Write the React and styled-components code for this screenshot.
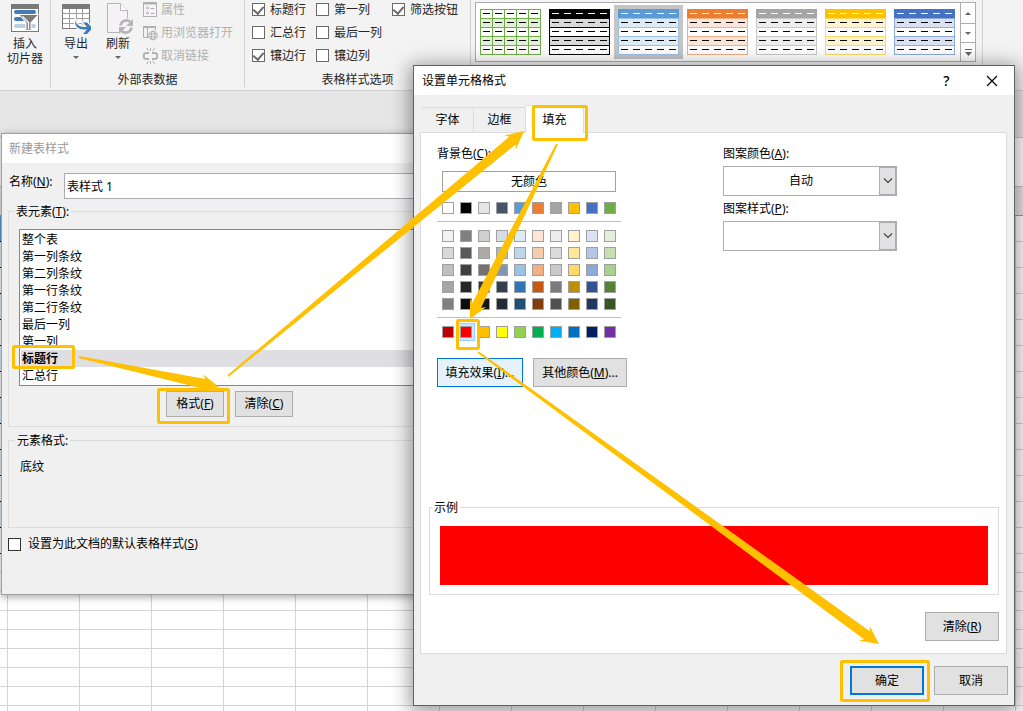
import React, { Fragment, useState } from 'react';
import styled, { createGlobalStyle } from 'styled-components';

const GlobalStyle = createGlobalStyle`
    * {
        box-sizing: border-box;
    }
    body {
        margin: 0;
        overflow: hidden;
    }
    body, button, input, select {
        font-family: "Noto Sans", "Noto Sans CJK SC", sans-serif;
        font-size: 12px;
        line-height: 16px;
        color: black;
    }
    u {
        text-underline-offset: 1px;
    }
`;

const Desktop = styled.div`
    position: relative;
    height: 100vh;
    overflow: hidden;
    background-color: white;
`;

/* ribbon */

const Ribbon = styled.header`
    display: flex;
    padding-bottom: 3px;
    background-color: #f3f3f3;
    border-bottom: 1px solid #d0d0d0;
`;
const Group = styled.section`
    display: flex;
    flex-direction: column;
    flex: none;
    height: 87px;
    width: ${props => props.$width};
    border-right: 1px solid #d2d2d2;
`;
const GroupBody = styled.div`
    display: flex;
    flex: 1;
    padding: 0 ${props => props.$pad || '0'};
`;
const GroupLabel = styled.div`
    line-height: 14px;
    text-align: center;
    color: #262626;
`;
const BigButton = styled.button`
    display: flex;
    flex-direction: column;
    align-items: center;
    width: ${props => props.$wide ? '50px' : '42px'};
    padding: 3px 0 0;
    border: none;
    background: none;
    line-height: 15px;
    color: #262626;
    svg {
        flex: none;
        margin-bottom: ${props => props.$wide ? '3px' : '1px'};
    }
`;
const Caret = styled.span`
    margin-top: 5px;
    border: 3px solid transparent;
    border-top-color: #666;
    border-bottom: none;
`;
const SmallList = styled.div`
    display: flex;
    flex-direction: column;
    gap: 3px;
    margin-left: 4px;
`;
const SmallButton = styled.button`
    display: flex;
    align-items: center;
    gap: 3px;
    height: 20px;
    padding: 0;
    border: none;
    background: none;
    white-space: nowrap;
    &:disabled {
        color: #b0b0b0;
    }
`;
const OptionGrid = styled.div`
    display: grid;
    grid-template-columns: 64px 76px auto;
    grid-auto-rows: 19px;
    row-gap: 4px;
`;
const CheckLabel = styled.label`
    display: flex;
    align-items: center;
    gap: ${props => props.$gap || '5px'};
    white-space: nowrap;
    color: ${props => props.$dark ? 'black' : '#262626'};
`;
const Checkbox = styled.input`
    appearance: none;
    display: grid;
    place-items: center;
    width: 13px;
    height: 13px;
    margin: 0;
    background-color: white;
    border: 1px solid ${props => props.$dark ? '#333' : '#6a6a6a'};
    &:checked::after {
        content: "";
        width: 5px;
        height: 8px;
        margin-bottom: 2px;
        border: solid #6a6a6a;
        border-width: 0 2px 2px 0;
        transform: rotate(40deg);
    }
`;
const Gallery = styled.div`
    display: flex;
    margin-top: 2px;
    height: 60px;
    background-color: white;
    border: 1px solid #abadb3;
`;
const StyleButton = styled.button`
    flex: none;
    width: 69px;
    height: 54px;
    margin: 2px 0;
    padding: 4px;
    border: none;
    background-color: ${props => props.$active ? '#c5c5c5' : 'transparent'};
    svg {
        display: block;
    }
`;
const GalleryScroll = styled.div`
    display: grid;
    grid-template-rows: 20px 19px 19px;
    width: 15px;
    margin-left: 1px;
    border-left: 1px solid #abadb3;
`;
const ScrollButton = styled.button`
    display: grid;
    place-items: center;
    padding: 0;
    border: none;
    border-top: ${props => props.$first ? 'none' : '1px solid #abadb3'};
    background: none;
`;

/* worksheet */

const ToolStrip = styled.div`
    height: 47px;
    background-color: #e6e6e6;
    border-bottom: 1px solid #c6c6c6;
`;
const FormulaBar = styled.div`
    height: 49px;
    border-bottom: 1px solid #c6c6c6;
`;
const ColumnBar = styled.div`
    height: 29px;
    background-color: #e6e6e6;
    border-bottom: 1px solid #9b9b9b;
`;
const Sheet = styled.table`
    table-layout: fixed;
    width: 1088px;
    border-spacing: 0;
`;
const Cell = styled.td`
    height: ${props => props.$tall ? '26px' : '19px'};
    padding: 0;
    border: solid #d4d4d4;
    border-width: 0 1px 1px 0;
    background-color: ${props => props.$fill || 'white'};
    border-bottom-color: ${props => props.$fill ? 'black' : '#d4d4d4'};
`;

/* dialogs */

const Window = styled.div`
    position: absolute;
    top: ${props => props.$top};
    left: ${props => props.$left};
    width: ${props => props.$width};
    background-color: #f0f0f0;
    border: 1px solid ${props => props.$active ? '#5f6264' : '#a0a0a0'};
    box-shadow: ${props => props.$active
        ? '0 3px 18px 3px rgba(0, 0, 0, 0.4)'
        : '0 2px 8px rgba(0, 0, 0, 0.35)'};
`;
const TitleBar = styled.div`
    display: flex;
    align-items: center;
    height: 29px;
    padding-left: ${props => props.$active ? '8px' : '7px'};
    background-color: white;
    color: ${props => props.$active ? 'black' : '#999'};
`;
const TitleText = styled.span`
    flex: 1;
`;
const TitleButton = styled.button`
    display: grid;
    place-items: center;
    width: 45px;
    height: 28px;
    padding: 0;
    border: none;
    background: none;
    font-size: 14px;
    font-weight: 500;
`;
const Button = styled.button`
    width: ${props => props.$width};
    height: ${props => props.$short ? '26px' : '29px'};
    padding: 0;
    white-space: nowrap;
    background-color: ${props => props.$hot ? '#e5f1fb' : '#e1e1e1'};
    border: ${props => props.$primary ? '2px' : '1px'} solid
        ${props => props.$hot || props.$primary ? '#0078d7' : '#adadad'};
`;
const Box = styled.fieldset`
    min-width: 0;
    margin: 0;
    padding: ${props => props.$pad};
    border: 1px solid #dcdcdc;
    legend {
        margin-left: ${props => props.$flush ? '-8px' : '-5px'};
        padding: 0 2px;
        line-height: 17px;
    }
`;

const StyleBody = styled.div`
    padding: 10px 6px 42px;
`;
const NameRow = styled.div`
    display: flex;
    gap: 11px;
    margin-bottom: 4px;
    line-height: 18px;
    label {
        width: 45px;
        padding-left: 1px;
        white-space: nowrap;
    }
`;
const NameInput = styled.input`
    flex: 1;
    height: 26px;
    padding: 0 2px;
    border: 1px solid #abadb3;
    background-color: white;
`;
const StyleGroups = styled.div`
    display: grid;
    gap: 5px;
`;
const List = styled.ul`
    margin: 0;
    padding: 1px;
    list-style: none;
    background-color: white;
    border: 1px solid #828790;
`;
const Item = styled.li`
    height: 17px;
    padding: 0 1px;
    line-height: 17px;
    font-weight: ${props => props.$active ? 700 : 400};
    background-color: ${props => props.$active ? '#dfdee3' : 'white'};
`;
const ListButtons = styled.div`
    display: flex;
    gap: 11px;
    margin: 5px 0 0 147px;
`;
const DefaultRow = styled.div`
    display: flex;
    margin-top: 8px;
`;

const FormatBody = styled.div`
    padding: 9px 7px 10px 6px;
`;
const Tabs = styled.div`
    display: flex;
    align-items: flex-end;
    height: 28px;
    padding-left: 2px;
`;
const Tab = styled.button`
    position: relative;
    height: ${props => props.$active ? '28px' : '25px'};
    width: ${props => props.$active ? '58px' : '52px'};
    margin-bottom: ${props => props.$active ? '-1px' : '0'};
    padding: 0;
    background-color: ${props => props.$active ? 'white' : '#f0f0f0'};
    border: solid #dcdcdc;
    border-width: 1px 1px 0 0;
`;
const Panel = styled.div`
    padding: 13px 7px 12px 8px;
    background-color: white;
    border: 1px solid #dcdcdc;
`;
const Columns = styled.div`
    display: grid;
    grid-template-columns: 286px 174px;
    padding-left: 8px;
    min-height: 353px;
`;
const Palette = styled.div`
    width: 184px;
    margin-top: 9px;
    padding: 0 5px;
`;
const NoColor = styled.button`
    width: 100%;
    height: 21px;
    margin-bottom: 10px;
    padding: 0;
    background-color: white;
    border: 1px solid #a0a0a0;
    line-height: 18px;
`;
const Swatches = styled.div`
    display: grid;
    grid-template-columns: repeat(10, 12px);
    gap: 5px 6px;
`;
const Swatch = styled.button`
    height: 12px;
    padding: 0;
    background-color: ${props => props.$color};
    border: 1px solid #a0a0a0;
    box-shadow: ${props => props.$active
        ? '0 0 0 2px #cce8ff, 0 0 0 3px #99d1ff'
        : 'none'};
`;
const Rule = styled.hr`
    height: 1px;
    margin: 7px -5px 8px;
    border: none;
    background-color: #c0c0c0;
`;
const ColorButtons = styled.div`
    display: flex;
    gap: 10px;
    margin-top: 20px;
`;
const Picker = styled.div`
    display: grid;
    height: 30px;
    margin: 4px 0 5px;
    border: 1px solid #abadb3;
    > * {
        grid-area: 1 / 1;
    }
`;
const Select = styled.select`
    appearance: none;
    width: 100%;
    padding: 0 18px 0 0;
    border: none;
    background-color: white;
    text-align: center;
    text-align-last: center;
`;
const PickerArrow = styled.span`
    display: grid;
    place-items: center;
    justify-self: end;
    width: 17px;
    background-color: #e1e1e1;
    border: 1px solid #abadb3;
    pointer-events: none;
`;
const Sample = styled.div`
    height: 59px;
    background-color: red;
`;
const PanelFooter = styled.div`
    display: flex;
    justify-content: flex-end;
    margin-top: 17px;
`;
const DialogFooter = styled.div`
    display: flex;
    justify-content: flex-end;
    gap: 10px;
    margin: 12px -1px 0 0;
`;

const Overlay = styled.svg`
    position: absolute;
    top: 0;
    left: 0;
    pointer-events: none;
`;

const SlicerIcon = () => (
    <svg width="30" height="30" viewBox="0 0 30 30">
        <rect x="1.5" y="1.5" width="27" height="27" fill="white" stroke="#7a7a7a" />
        <rect x="1" y="1" width="28" height="5" fill="#7a7a7a" />
        <rect x="4" y="7" width="22" height="4" rx="2" fill="#3f7cb8" />
        <rect x="4" y="14" width="11" height="4" rx="2" fill="#3f7cb8" />
        <rect x="4" y="21" width="22" height="4" rx="2" fill="#b9cfe6" />
        <path d="M9 11.5h19.500l-7.500 8v8h-5v-8z" fill="#7a7a7a" stroke="white" />
        <path d="M12.500 13.500l6 6v7" fill="none" stroke="white" strokeWidth="1.300" />
    </svg>
);

const ExportIcon = () => (
    <svg width="30" height="32" viewBox="0 0 30 32">
        <rect x="1.5" y="1.5" width="27" height="24" fill="white" stroke="#7a7a7a" />
        <rect x="1" y="1" width="28" height="5" fill="#7a7a7a" />
        <path d="M2 10.500h26M2 15.500h26M2 20.500h26M8.500 6v19M15.500 6v19M21.500 6v19" stroke="#a0a0a0" />
        <path d="M14.500 18c1.500 4.500 5 6 9 6h2.500l-4-4.500h4l5.500 5.500-5.500 6h-4l4-4.500H23c-6 0-9.500-4-8.500-8.500z" fill="#3f7cb8" stroke="#f3f3f3" strokeWidth="3" paintOrder="stroke" />
    </svg>
);

const RefreshIcon = () => (
    <svg width="30" height="32" viewBox="0 0 30 32">
        <path d="M4.500 .5h13l7 7v22h-20z" fill="#f6f2f8" stroke="#b5b5b5" />
        <path d="M17.500 .5v7h7" fill="white" stroke="#b5b5b5" />
        <circle cx="23" cy="23.500" r="8.500" fill="#f3f3f3" />
        <path d="M17.500 22.500a6 6 0 0 1 10-3.500M28.500 24.500a6 6 0 0 1-10 3.500" fill="none" stroke="#b5b5b5" strokeWidth="2.600" />
        <path d="M30 16v7h-7zM16 31v-7h7z" fill="#b5b5b5" />
    </svg>
);

const PropsIcon = () => (
    <svg width="15" height="16" viewBox="0 0 15 16" fill="none" stroke="#b0b0b0">
        <rect x=".5" y=".5" width="13" height="14" fill="#f6f2f8" />
        <path d="M0 1.500h14" strokeWidth="2" />
        <circle cx="4.500" cy="6" r="1" />
        <circle cx="4.500" cy="11" r="1" />
        <path d="M7.500 6.500h4M7.500 11.500h4" />
    </svg>
);

const BrowserIcon = () => (
    <svg width="15" height="16" viewBox="0 0 15 16" fill="none" stroke="#b0b0b0">
        <path d="M5.500 12.500h-5V1.500h12v4M4.500 3v9" />
        <path d="M0 2h13" strokeWidth="2" />
        <circle cx="10" cy="10.500" r="4.300" fill="#f3f3f3" />
        <path d="M6 9h8M6 12h8" />
        <ellipse cx="10" cy="10.500" rx="1.800" ry="4.300" />
    </svg>
);

const UnlinkIcon = () => (
    <svg width="15" height="16" viewBox="0 0 15 16" fill="none" stroke="#b0b0b0">
        <path d="M6 5H3.500a3 3 0 0 0 0 6H6M9 5h2.500a3 3 0 0 1 0 6H9" strokeWidth="2" />
        <path d="M3.500 0l2 3M7.500 0v3M11.500 0l-2 3M3.500 16l2-3M7.500 16v-3M11.500 16l-2-3" />
    </svg>
);

const CloseIcon = () => (
    <svg width="12" height="12" viewBox="0 0 12 12">
        <path d="M1 1l10 10M11 1L1 11" stroke="black" strokeWidth="1.200" />
    </svg>
);

const Chevron = () => (
    <svg width="10" height="6" viewBox="0 0 10 6">
        <path d="M1 .5l4 4 4-4" fill="none" stroke="#444" strokeWidth="1.200" />
    </svg>
);

const tableStyles = [
    { head: 'white', band: '#e2efda', line: '#70ad47', dash: 'black', grid: true },
    { head: 'black', band: '#d9d9d9', line: 'black', dash: 'white' },
    { head: '#5b9bd5', band: '#ddebf7', line: '#9bc2e6', dash: 'white' },
    { head: '#ed7d31', band: '#fce4d6', line: '#f4b084', dash: 'white' },
    { head: '#a5a5a5', band: '#ededed', line: '#c9c9c9', dash: 'white' },
    { head: '#ffc000', band: '#fff2cc', line: '#ffd966', dash: 'white' },
    { head: '#4472c4', band: '#d9e1f2', line: '#8ea9db', dash: 'white' },
];

const TableThumb = ({ head, band, line, dash, grid }) => (
    <svg width="61" height="46" viewBox="0 0 61 46" shapeRendering="crispEdges">
        {[head, band, 'white', band, 'white'].map((fill, i) => (
            <Fragment key={i}>
                <rect x="0" y={i * 9} width="61" height="9" fill={fill} />
                {(i > 0 || grid) && <rect x=".5" y={i * 9 + 0.5} width="60" height="9" fill="none" stroke={line} />}
            </Fragment>
        ))}
        {grid && <path d="M12.500 0v46M24.500 0v46M36.500 0v46M48.500 0v46" stroke={line} />}
        {[0, 1, 2, 3, 4].map(row => [3, 15, 27, 39, 51].map(x => (
            <rect key={`${row}-${x}`} x={x} y={row * 9 + 4} width="7" height="1" fill={row === 0 ? dash : 'black'} />
        )))}
    </svg>
);

const options = [
    ['标题行', true], ['第一列', false], ['筛选按钮', true],
    ['汇总行', false], ['最后一列', false], null,
    ['镶边行', true], ['镶边列', false],
];

const elements = ['整个表', '第一列条纹', '第二列条纹', '第一行条纹', '第二行条纹', '最后一列', '第一列', '标题行', '汇总行'];

const themeColors = ['#ffffff', '#000000', '#e7e6e6', '#44546a', '#5b9bd5', '#ed7d31', '#a5a5a5', '#ffc000', '#4472c4', '#70ad47'];
const tints = [
    '#f2f2f2', '#808080', '#d0cece', '#d6dce4', '#ddebf7', '#fce4d6', '#ededed', '#fff2cc', '#d9e1f2', '#e2efda',
    '#d9d9d9', '#595959', '#aeaaaa', '#acb9ca', '#bdd7ee', '#f8cbad', '#dbdbdb', '#ffe699', '#b4c6e7', '#c6e0b4',
    '#bfbfbf', '#404040', '#757171', '#8497b0', '#9bc2e6', '#f4b084', '#c9c9c9', '#ffd966', '#8ea9db', '#a9d08e',
    '#a6a6a6', '#262626', '#3a3838', '#333f4f', '#2f75b5', '#c65911', '#7b7b7b', '#bf8f00', '#305496', '#548235',
    '#808080', '#0d0d0d', '#161616', '#222b35', '#1f4e78', '#833c0c', '#525252', '#806000', '#203764', '#375623',
];
const standardColors = ['#c00000', '#ff0000', '#ffc000', '#ffff00', '#92d050', '#00b050', '#00b0f0', '#0070c0', '#002060', '#7030a0'];

const SwatchGrid = ({ colors, selected, onPick }) => (
    <Swatches>
        {colors.map((color, i) => (
            <Swatch
                key={i}
                type="button"
                aria-label={color}
                $color={color}
                $active={selected === color}
                onClick={() => onPick(color)}
            />
        ))}
    </Swatches>
);

// tapered arrow, thin at the tail and wide at the head
const Arrow = ({ from, to }) => {
    const length = Math.hypot(to[0] - from[0], to[1] - from[1]);
    const ux = (to[0] - from[0]) / length;
    const uy = (to[1] - from[1]) / length;
    const at = (along, side) => `${from[0] + ux * along - uy * side},${from[1] + uy * along + ux * side}`;
    const points = [
        at(0, 1), at(length - 15, 5), at(length - 18, 9), at(length, 0),
        at(length - 18, -9), at(length - 15, -5), at(0, -1),
    ];
    return <polygon points={points.join(' ')} fill="#ffc000" />;
};

const Ring = props => <rect {...props} rx="1" fill="none" stroke="#ffc000" strokeWidth="3" />;

const sheetRows = [...Array(13).fill(true), ...Array(20).fill(false)];
const sheetColumns = Array(15).fill(0);

const fillFor = (tall, row) => {
    if (!tall) return undefined;
    if (row === 0) return '#5b9bd5';
    return row % 2 ? '#ddebf7' : '#f8f8f8';
};

const App = () => {
    const [element, setElement] = useState('标题行');
    const [color, setColor] = useState('#ff0000');

    return (
        <Desktop>
            <GlobalStyle />
            <Ribbon>
                <Group $width="51px">
                    <GroupBody>
                        <BigButton $wide><SlicerIcon />插入<br />切片器</BigButton>
                    </GroupBody>
                </Group>
                <Group $width="194px">
                    <GroupBody $pad="4px">
                        <BigButton><ExportIcon />导出<Caret /></BigButton>
                        <BigButton><RefreshIcon />刷新<Caret /></BigButton>
                        <SmallList>
                            <SmallButton disabled><PropsIcon />属性</SmallButton>
                            <SmallButton disabled><BrowserIcon />用浏览器打开</SmallButton>
                            <SmallButton disabled><UnlinkIcon />取消链接</SmallButton>
                        </SmallList>
                    </GroupBody>
                    <GroupLabel>外部表数据</GroupLabel>
                </Group>
                <Group $width="226px">
                    <GroupBody $pad="7px">
                        <OptionGrid>
                            {options.map((option, i) => option
                                ? (
                                    <CheckLabel key={i}>
                                        <Checkbox type="checkbox" defaultChecked={option[1]} />
                                        {option[0]}
                                    </CheckLabel>
                                )
                                : <span key={i} />
                            )}
                        </OptionGrid>
                    </GroupBody>
                    <GroupLabel>表格样式选项</GroupLabel>
                </Group>
                <Group $width="512px">
                    <GroupBody $pad="4px">
                        <Gallery>
                            {tableStyles.map((style, i) => (
                                <StyleButton key={i} $active={i === 2} aria-label={`style ${i + 1}`}>
                                    <TableThumb {...style} />
                                </StyleButton>
                            ))}
                            <GalleryScroll>
                                <ScrollButton $first aria-label="up">
                                    <svg width="6" height="3"><path d="M0 3l3-3 3 3z" fill="#666" /></svg>
                                </ScrollButton>
                                <ScrollButton aria-label="down">
                                    <svg width="6" height="3"><path d="M0 0l3 3 3-3z" fill="#666" /></svg>
                                </ScrollButton>
                                <ScrollButton aria-label="more">
                                    <svg width="7" height="7"><path d="M0 0h7v1H0zM0 3l3.500 4L7 3z" fill="#666" /></svg>
                                </ScrollButton>
                            </GalleryScroll>
                        </Gallery>
                    </GroupBody>
                </Group>
            </Ribbon>
            <ToolStrip />
            <FormulaBar />
            <ColumnBar />
            <Sheet>
                <colgroup>
                    <col style={{ width: 8 }} />
                    {sheetColumns.map((_, i) => <col key={i} />)}
                </colgroup>
                <tbody>
                    {sheetRows.map((tall, row) => (
                        <tr key={row}>
                            <Cell $tall={tall} $fill={fillFor(tall, row)} />
                            {sheetColumns.map((_, i) => <Cell key={i} $tall={tall} />)}
                        </tr>
                    ))}
                </tbody>
            </Sheet>

            <Window role="dialog" aria-label="新建表样式" $top="133px" $left="1px" $width="480px">
                <TitleBar><TitleText>新建表样式</TitleText></TitleBar>
                <StyleBody>
                    <NameRow>
                        <label htmlFor="style-name">名称(<u>N</u>):</label>
                        <NameInput id="style-name" defaultValue="表样式 1" />
                    </NameRow>
                    <StyleGroups>
                        <Box $pad="9px 10px 9px">
                            <legend>表元素(<u>T</u>):</legend>
                            <List role="listbox">
                                {elements.map(name => (
                                    <Item
                                        key={name}
                                        role="option"
                                        aria-selected={name === element}
                                        $active={name === element}
                                        onClick={() => setElement(name)}
                                    >
                                        {name}
                                    </Item>
                                ))}
                            </List>
                            <ListButtons>
                                <Button $short $width="58px">格式(<u>F</u>)</Button>
                                <Button $short $width="58px">清除(<u>C</u>)</Button>
                            </ListButtons>
                        </Box>
                        <Box $pad="10px 11px 52px">
                            <legend>元素格式:</legend>
                            底纹
                        </Box>
                    </StyleGroups>
                    <DefaultRow>
                        <CheckLabel $dark $gap="7px">
                            <Checkbox $dark type="checkbox" />
                            <span>设置为此文档的默认表格样式(<u>S</u>)</span>
                        </CheckLabel>
                    </DefaultRow>
                </StyleBody>
            </Window>

            <Window role="dialog" aria-label="设置单元格格式" $active $top="65px" $left="413px" $width="602px">
                <TitleBar $active>
                    <TitleText>设置单元格格式</TitleText>
                    <TitleButton aria-label="help">?</TitleButton>
                    <TitleButton aria-label="close"><CloseIcon /></TitleButton>
                </TitleBar>
                <FormatBody>
                    <Tabs role="tablist">
                        <Tab role="tab">字体</Tab>
                        <Tab role="tab">边框</Tab>
                        <Tab role="tab" aria-selected $active>填充</Tab>
                    </Tabs>
                    <Panel>
                        <Columns>
                            <div>
                                <div>背景色(<u>C</u>):</div>
                                <Palette>
                                    <NoColor>无颜色</NoColor>
                                    <SwatchGrid colors={themeColors} onPick={setColor} />
                                    <Rule />
                                    <SwatchGrid colors={tints} onPick={setColor} />
                                    <Rule />
                                    <SwatchGrid colors={standardColors} selected={color} onPick={setColor} />
                                </Palette>
                                <ColorButtons>
                                    <Button $hot $width="86px">填充效果(<u>I</u>)...</Button>
                                    <Button $width="94px">其他颜色(<u>M</u>)...</Button>
                                </ColorButtons>
                            </div>
                            <div>
                                <label htmlFor="pattern-color">图案颜色(<u>A</u>):</label>
                                <Picker>
                                    <Select id="pattern-color"><option>自动</option></Select>
                                    <PickerArrow><Chevron /></PickerArrow>
                                </Picker>
                                <label htmlFor="pattern-style">图案样式(<u>P</u>):</label>
                                <Picker>
                                    <Select id="pattern-style"><option> </option></Select>
                                    <PickerArrow><Chevron /></PickerArrow>
                                </Picker>
                            </div>
                        </Columns>
                        <Box $flush $pad="10px 10px 9px">
                            <legend>示例</legend>
                            <Sample style={{ backgroundColor: color }} />
                        </Box>
                        <PanelFooter>
                            <Button $width="74px">清除(<u>R</u>)</Button>
                        </PanelFooter>
                    </Panel>
                    <DialogFooter>
                        <Button $primary $width="74px">确定</Button>
                        <Button $width="74px">取消</Button>
                    </DialogFooter>
                </FormatBody>
            </Window>

            <Overlay width="1023" height="711" viewBox="0 0 1023 711">
                <Ring x="13.5" y="346.5" width="60" height="21" />
                <Ring x="158.5" y="389.5" width="70" height="33" />
                <Ring x="533.5" y="106.5" width="53" height="33" />
                <Ring x="457.5" y="320.5" width="21" height="28" />
                <Ring x="841.5" y="661.5" width="87" height="39" />
                <Arrow from={[79, 357]} to={[219, 387]} />
                <Arrow from={[228, 376]} to={[524, 131]} />
                <Arrow from={[557, 144]} to={[470, 319]} />
                <Arrow from={[478, 352]} to={[879, 644]} />
            </Overlay>
        </Desktop>
    );
};

export default App;
